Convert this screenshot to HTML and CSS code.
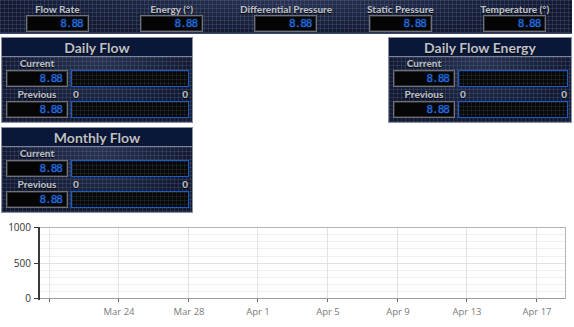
FILE: index.html
```html
<!DOCTYPE html>
<html lang="en">
<head>
  <meta charset="UTF-8" />
  <title>Flow Dashboard</title>
  <link rel="stylesheet" href="styles.css">
</head>
<body>
  <div class="topbar">
    <div class="reading">
      <div class="reading-label">Flow Rate</div>
      <div class="lcd">8.88</div>
    </div>
    <div class="reading">
      <div class="reading-label">Energy (°)</div>
      <div class="lcd">8.88</div>
    </div>
    <div class="reading">
      <div class="reading-label">Differential Pressure</div>
      <div class="lcd">8.88</div>
    </div>
    <div class="reading">
      <div class="reading-label">Static Pressure</div>
      <div class="lcd">8.88</div>
    </div>
    <div class="reading">
      <div class="reading-label">Temperature (°)</div>
      <div class="lcd">8.88</div>
    </div>
  </div>

  <div class="panels">
    <div class="col left-col">
      <div class="panel">
        <div class="panel-title">Daily Flow</div>
        <div class="panel-body">
          <div class="row-label"><span class="cap">Current</span></div>
          <div class="row">
            <div class="lcd">8.88</div>
            <div class="bar"></div>
          </div>
          <div class="row-label"><span class="cap">Previous</span><span class="num">0</span><span class="num end">0</span></div>
          <div class="row">
            <div class="lcd">8.88</div>
            <div class="bar"></div>
          </div>
        </div>
      </div>

      <div class="panel">
        <div class="panel-title">Monthly Flow</div>
        <div class="panel-body">
          <div class="row-label"><span class="cap">Current</span></div>
          <div class="row">
            <div class="lcd">8.88</div>
            <div class="bar"></div>
          </div>
          <div class="row-label"><span class="cap">Previous</span><span class="num">0</span><span class="num end">0</span></div>
          <div class="row">
            <div class="lcd">8.88</div>
            <div class="bar"></div>
          </div>
        </div>
      </div>
    </div>

    <div class="col right-col">
      <div class="panel">
        <div class="panel-title">Daily Flow Energy</div>
        <div class="panel-body">
          <div class="row-label"><span class="cap">Current</span></div>
          <div class="row">
            <div class="lcd">8.88</div>
            <div class="bar"></div>
          </div>
          <div class="row-label"><span class="cap">Previous</span><span class="num">0</span><span class="num end">0</span></div>
          <div class="row">
            <div class="lcd">8.88</div>
            <div class="bar"></div>
          </div>
        </div>
      </div>
    </div>
  </div>

  <div class="chart">
    <svg width="574" height="111" viewBox="0 0 574 111">
      <!-- minor horizontal grid -->
      <g stroke="#efefef" stroke-width="1">
        <line x1="40" y1="18.5" x2="565" y2="18.5" />
        <line x1="40" y1="25.5" x2="565" y2="25.5" />
        <line x1="40" y1="32.5" x2="565" y2="32.5" />
        <line x1="40" y1="40.5" x2="565" y2="40.5" />
        <line x1="40" y1="54.5" x2="565" y2="54.5" />
        <line x1="40" y1="61.5" x2="565" y2="61.5" />
        <line x1="40" y1="68.5" x2="565" y2="68.5" />
        <line x1="40" y1="75.5" x2="565" y2="75.5" />
      </g>
      <line x1="40" y1="47.5" x2="565" y2="47.5" stroke="#e2e2e2" />
      <!-- vertical grid -->
      <g stroke="#e3e3e3" stroke-width="1">
        <line x1="49.5" y1="11" x2="49.5" y2="83" />
        <line x1="118.5" y1="11" x2="118.5" y2="83" />
        <line x1="188.5" y1="11" x2="188.5" y2="83" />
        <line x1="257.5" y1="11" x2="257.5" y2="83" />
        <line x1="327.5" y1="11" x2="327.5" y2="83" />
        <line x1="397.5" y1="11" x2="397.5" y2="83" />
        <line x1="466.5" y1="11" x2="466.5" y2="83" />
        <line x1="536.5" y1="11" x2="536.5" y2="83" />
      </g>
      <!-- frame -->
      <line x1="40" y1="11.5" x2="565" y2="11.5" stroke="#b5b5b5" />
      <line x1="565.5" y1="11" x2="565.5" y2="83" stroke="#b5b5b5" />
      <line x1="40" y1="82.5" x2="565" y2="82.5" stroke="#9a9a9a" />
      <!-- y axis -->
      <line x1="39" y1="11" x2="39" y2="84" stroke="#3a3a3a" stroke-width="2" />
      <g stroke="#3a3a3a" stroke-width="1">
        <line x1="34" y1="11.5" x2="39" y2="11.5" />
        <line x1="34" y1="47.5" x2="39" y2="47.5" />
        <line x1="34" y1="82.5" x2="39" y2="82.5" />
      </g>
      <!-- x ticks -->
      <g stroke="#6a6a6a" stroke-width="1">
        <line x1="49.5" y1="83" x2="49.5" y2="86" />
        <line x1="118.5" y1="83" x2="118.5" y2="86" />
        <line x1="188.5" y1="83" x2="188.5" y2="86" />
        <line x1="257.5" y1="83" x2="257.5" y2="86" />
        <line x1="327.5" y1="83" x2="327.5" y2="86" />
        <line x1="397.5" y1="83" x2="397.5" y2="86" />
        <line x1="466.5" y1="83" x2="466.5" y2="86" />
        <line x1="536.5" y1="83" x2="536.5" y2="86" />
      </g>
      <g class="y-labels" text-anchor="end">
        <text x="31" y="15">1000</text>
        <text x="31" y="51">500</text>
        <text x="31" y="86">0</text>
      </g>
      <g class="x-labels" text-anchor="middle">
        <text x="119" y="99">Mar 24</text>
        <text x="189" y="99">Mar 28</text>
        <text x="258" y="99">Apr 1</text>
        <text x="328" y="99">Apr 5</text>
        <text x="398" y="99">Apr 9</text>
        <text x="467" y="99">Apr 13</text>
        <text x="537" y="99">Apr 17</text>
      </g>
    </svg>
  </div>
</body>
</html>
```

FILE: styles.css
```css
* {
  box-sizing: border-box;
}
body {
  margin: 0;
  font-family: Lato, "Open Sans", sans-serif;
  background: #fff;
  width: 574px;
  height: 327px;
  overflow: hidden;
}
.topbar,
.panel-body {
  background-color: #131a30;
  background-image:
    radial-gradient(ellipse at 50% 0%, rgba(120, 140, 190, 0.22), transparent 70%),
    linear-gradient(rgba(95, 110, 160, 0.26) 1px, transparent 1px),
    linear-gradient(90deg, rgba(95, 110, 160, 0.26) 1px, transparent 1px);
  background-size: 100% 100%, 4px 4px, 4px 4px;
}
.topbar {
  width: 572px;
  height: 34px;
  display: grid;
  grid-template-columns: repeat(5, 1fr);
  border-bottom: 1px solid #3c4560;
}
.reading {
  display: flex;
  flex-direction: column;
  align-items: center;
  padding-top: 3px;
}
.reading-label {
  font-size: 10px;
  font-weight: 900;
  color: #b9bdc6;
  line-height: 12px;
  height: 12px;
  text-shadow: 0 1px 1px #000;
}
.lcd {
  width: 63px;
  height: 17px;
  background: #050505;
  border: 1px solid #6e7178;
  box-shadow: inset 0 0 0 1px #2a2c30;
  color: #2470e6;
  font-family: "DejaVu Sans Mono", monospace;
  font-size: 11px;
  line-height: 15px;
  text-align: right;
  padding-right: 5px;
  letter-spacing: -1px;
  text-shadow: 0 0 2px rgba(40, 110, 240, 0.6);
}
.panels {
  display: flex;
  justify-content: space-between;
  margin-top: 3px;
  padding: 0 2px 0 1px;
}
.col {
  display: flex;
  flex-direction: column;
  gap: 4px;
}
.left-col {
  width: 192px;
}
.right-col {
  width: 184px;
}
.panel {
  border: 1px solid #8990a2;
  background: #0b1638;
}
.panel-title {
  height: 19px;
  background: #0b1738;
  color: #bcc0c9;
  font-size: 14px;
  font-weight: bold;
  line-height: 19px;
  text-align: center;
  text-shadow: 0 1px 1px #000;
  border-bottom: 1px solid #7e8496;
}
.panel-body {
  height: 65px;
  padding: 0 3px 0 4px;
}
.row-label {
  display: flex;
  height: 14px;
  align-items: flex-end;
  padding-bottom: 1px;
  font-size: 10px;
  font-weight: 900;
  color: #b9bdc6;
  line-height: 11px;
  text-shadow: 0 1px 1px #000;
}
.row-label:first-child {
  height: 13px;
}
.row-label .cap {
  width: 62px;
  text-align: center;
}
.row-label .num {
  margin-left: 5px;
}
.row-label .end {
  margin-left: auto;
  margin-right: 1px;
}
.row {
  display: flex;
  gap: 3px;
}
.row .lcd {
  width: 62px;
}
.bar {
  flex: 1;
  height: 17px;
  border: 1px solid #1d5cc8;
  background-color: #070808;
  background-image:
    linear-gradient(rgba(70, 80, 100, 0.25) 1px, transparent 1px),
    linear-gradient(90deg, rgba(70, 80, 100, 0.25) 1px, transparent 1px);
  background-size: 4px 4px;
}
.chart {
  margin-top: 3px;
}
.chart svg {
  display: block;
}
.y-labels text {
  font-family: "Open Sans", sans-serif;
  font-size: 10px;
  fill: #333;
}
.x-labels text {
  font-family: "Open Sans", sans-serif;
  font-size: 9.5px;
  fill: #7a7a7a;
}
```
